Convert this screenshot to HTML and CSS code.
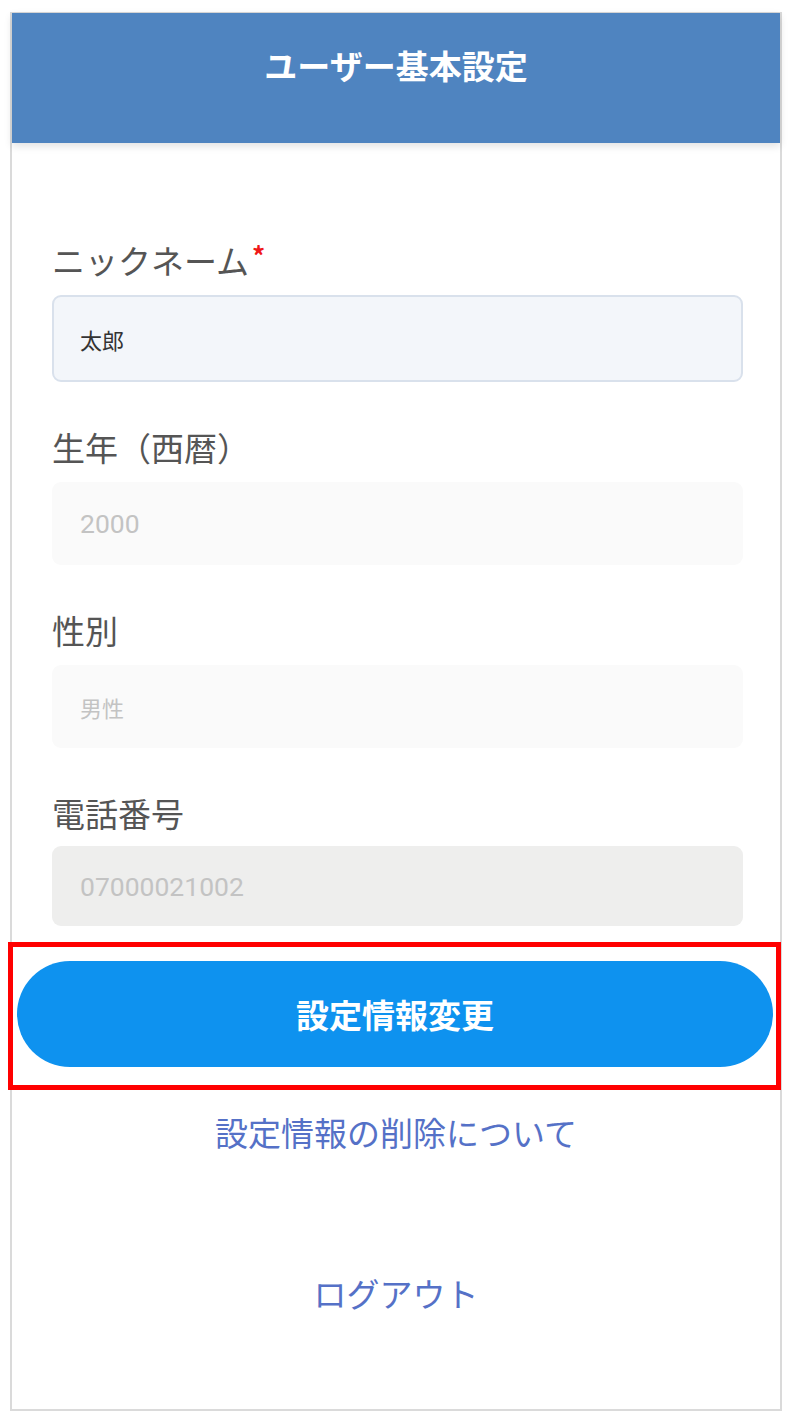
FILE: index.html
```html
<!DOCTYPE html>
<html lang="ja">
<head>
<meta charset="utf-8">
<title>ユーザー基本設定</title>
<link rel="stylesheet" href="styles.css">
</head>
<body>
<div class="frame">
  <header class="header">
    <h1 class="title">ユーザー基本設定</h1>
  </header>
  <div class="form">
    <div class="field">
      <div class="label">ニックネーム<span class="req">*</span></div>
      <div class="input input-edit"><span class="value value-jp">太郎</span></div>
    </div>
    <div class="field">
      <div class="label">生年（西暦）</div>
      <div class="input input-soft"><span class="value value-num muted">2000</span></div>
    </div>
    <div class="field">
      <div class="label">性別</div>
      <div class="input input-soft"><span class="value value-jp muted">男性</span></div>
    </div>
    <div class="field field-last">
      <div class="label">電話番号</div>
      <div class="input input-disabled"><span class="value value-num muted">07000021002</span></div>
    </div>
  </div>
  <div class="highlight">
    <button class="btn" type="button">設定情報変更</button>
  </div>
  <a class="link link-delete" href="#">設定情報の削除について</a>
  <a class="link link-logout" href="#">ログアウト</a>
</div>
</body>
</html>
```
FILE: styles.css
```css
* { box-sizing: border-box; }
html, body { margin: 0; padding: 0; background: #ffffff; }
body {
  font-family: "Noto Sans CJK JP", "Noto Sans", sans-serif;
  width: 790px;
  height: 1412px;
  overflow: hidden;
}
.frame {
  margin: 12px 0 0 10px;
  width: 772px;
  height: 1399px;
  border: 2px solid #dadada;
  border-top: 1px solid #dadada;
  background: #ffffff;
  display: flex;
  flex-direction: column;
}
.header {
  height: 130px;
  background: #4f84c0;
  box-shadow: 0 3px 8px rgba(0, 0, 0, 0.12);
  padding-top: 32px;
  text-align: center;
  position: relative;
  z-index: 1;
}
.title {
  margin: 0;
  font-size: 33px;
  line-height: 40px;
  font-weight: 700;
  color: #ffffff;
}
.form {
  padding: 97px 0 0 40px;
  width: 731px;
}
.field { margin-bottom: 45px; }
.field-last { margin-bottom: 16px; }
.label {
  font-size: 33px;
  line-height: 40px;
  height: 40px;
  color: #555555;
  margin-bottom: 15px;
}
.field-last .label { margin-bottom: 13px; }
.req {
  color: #f01818;
  font-size: 26px;
  font-weight: 700;
  line-height: 0;
  vertical-align: 8px;
  margin-left: 3px;
}
.input {
  width: 691px;
  height: 83px;
  border-radius: 9px;
  display: flex;
  align-items: center;
  padding-left: 28px;
}
.input-edit {
  height: 87px;
  background: #f3f6fa;
  border: 2px solid #d9e1ec;
  padding-left: 26px;
}
.input-soft { background: #fafafa; }
.input-disabled { background: #eeeeed; height: 80px; }
.value { color: #333333; }
.value-jp { font-size: 22px; }
.value-num { font-family: "Roboto", "Noto Sans CJK JP", sans-serif; font-size: 26.5px; }
.muted { color: #c3c3c3; }
.highlight {
  margin-left: -4px;
  width: 773px;
  border: 5px solid #ff0000;
  padding: 14px 2px 18px 4px;
}
.btn {
  display: block;
  width: 756px;
  height: 106px;
  border: none;
  border-radius: 53px;
  background: #0e92ef;
  color: #ffffff;
  font-family: "Noto Sans CJK JP", sans-serif;
  font-size: 33px;
  font-weight: 700;
  padding: 0;
  cursor: pointer;
}
.link {
  display: block;
  text-align: center;
  font-size: 33px;
  line-height: 44px;
  color: #5571c7;
  text-decoration: none;
}
.link-delete { margin-top: 20px; }
.link-logout { margin-top: 117px; }
```
